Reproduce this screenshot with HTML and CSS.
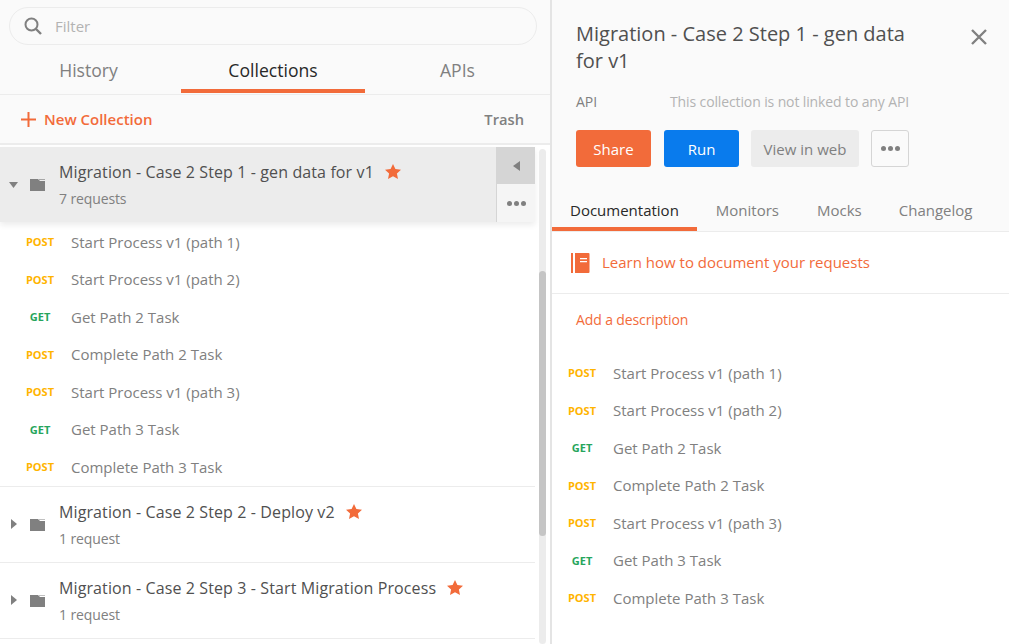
FILE: index.html
```html
<!DOCTYPE html>
<html>
    <head>
        <title>Collections</title>
        <link rel="stylesheet" href="styles.css">
    </head>
    <body>
        <div class="sidebar">
            <div class="search-wrap">
                <div class="search">
                    <svg class="search-icon" width="18" height="18" viewBox="0 0 18 18"><circle cx="7.5" cy="7.5" r="6" fill="none" stroke="#808080" stroke-width="2"/><path d="M12 12l5 5" stroke="#808080" stroke-width="2.4" fill="none"/></svg>
                    <span class="search-text">Filter</span>
                </div>
            </div>
            <div class="tabs">
                <div class="tab tab-first">History</div>
                <div class="tab tab-mid active">Collections</div>
                <div class="tab tab-last">APIs</div>
            </div>
            <div class="toolbar">
                <div class="new-coll">
                    <svg width="15" height="15" viewBox="0 0 15 15"><path d="M6.5 0h2v6.5H15v2H8.500V15h-2V8.500H0v-2h6.500z" fill="#f26b3a"/></svg>
                    <span>New Collection</span>
                </div>
                <div class="trash">Trash</div>
            </div>
            <div class="list">
                <div class="coll-head selected">
                    <svg class="caret" width="9" height="6" viewBox="0 0 9 6"><path d="M0 0h9L4.500 6z" fill="#808080"/></svg>
                    <svg class="folder" width="15" height="12" viewBox="0 0 15 12"><path d="M0 0h8l2 2h5v10H0z" fill="#808080"/><path d="M9 0h6v1H9z" fill="#a6a6a6"/></svg>
                    <div class="coll-info">
                        <div class="coll-name">Migration - Case 2 Step 1 - gen data for v1 <svg class="star" width="16" height="15" viewBox="0 0 16 15"><path d="M8 0l2.400 5 5.600.7-4.100 3.800 1.100 5.500L8 12.300 3 15l1.100-5.500L0 5.700 5.600 5z" fill="#f26b3a"/></svg></div>
                        <div class="coll-count">7 requests</div>
                    </div>
                    <div class="coll-actions">
                        <div class="act act-top"><svg width="7" height="10" viewBox="0 0 7 10"><path d="M7 0v10L0 5z" fill="#808080"/></svg></div>
                        <div class="act act-bottom"><span class="dots"><i></i><i></i><i></i></span></div>
                    </div>
                </div>
                <div class="requests">
                    <div class="req"><span class="method post">POST</span><span class="req-name">Start Process v1 (path 1)</span></div>
                    <div class="req"><span class="method post">POST</span><span class="req-name">Start Process v1 (path 2)</span></div>
                    <div class="req"><span class="method get">GET</span><span class="req-name">Get Path 2 Task</span></div>
                    <div class="req"><span class="method post">POST</span><span class="req-name">Complete Path 2 Task</span></div>
                    <div class="req"><span class="method post">POST</span><span class="req-name">Start Process v1 (path 3)</span></div>
                    <div class="req"><span class="method get">GET</span><span class="req-name">Get Path 3 Task</span></div>
                    <div class="req"><span class="method post">POST</span><span class="req-name">Complete Path 3 Task</span></div>
                </div>
                <div class="coll-head">
                    <svg class="caret" width="6" height="10" viewBox="0 0 6 10"><path d="M0 0l6 5-6 5z" fill="#808080"/></svg>
                    <svg class="folder" width="15" height="12" viewBox="0 0 15 12"><path d="M0 0h8l2 2h5v10H0z" fill="#808080"/><path d="M9 0h6v1H9z" fill="#c0c0c0"/></svg>
                    <div class="coll-info">
                        <div class="coll-name">Migration - Case 2 Step 2 - Deploy v2 <svg class="star" width="16" height="15" viewBox="0 0 16 15"><path d="M8 0l2.400 5 5.600.7-4.100 3.800 1.100 5.500L8 12.300 3 15l1.100-5.500L0 5.700 5.600 5z" fill="#f26b3a"/></svg></div>
                        <div class="coll-count">1 request</div>
                    </div>
                </div>
                <div class="coll-head">
                    <svg class="caret" width="6" height="10" viewBox="0 0 6 10"><path d="M0 0l6 5-6 5z" fill="#808080"/></svg>
                    <svg class="folder" width="15" height="12" viewBox="0 0 15 12"><path d="M0 0h8l2 2h5v10H0z" fill="#808080"/><path d="M9 0h6v1H9z" fill="#c0c0c0"/></svg>
                    <div class="coll-info">
                        <div class="coll-name">Migration - Case 2 Step 3 - Start Migration Process <svg class="star" width="16" height="15" viewBox="0 0 16 15"><path d="M8 0l2.400 5 5.600.7-4.100 3.800 1.100 5.500L8 12.300 3 15l1.100-5.500L0 5.700 5.600 5z" fill="#f26b3a"/></svg></div>
                        <div class="coll-count">1 request</div>
                    </div>
                </div>
                <div class="scrollbar"><div class="thumb"></div></div>
            </div>
        </div>
        <div class="detail">
            <div class="detail-top">
                <div class="title-row">
                    <h1>Migration - Case 2 Step 1 - gen data for v1</h1>
                    <svg class="close" width="16" height="16" viewBox="0 0 16 16"><path d="M1 1l14 14M15 1L1 15" stroke="#808080" stroke-width="2.400" fill="none"/></svg>
                </div>
                <div class="api-row">
                    <span class="api-label">API</span>
                    <span class="api-text">This collection is not linked to any API</span>
                </div>
                <div class="buttons">
                    <div class="btn btn-share">Share</div>
                    <div class="btn btn-run">Run</div>
                    <div class="btn btn-web">View in web</div>
                    <div class="btn btn-more"><span class="dots"><i></i><i></i><i></i></span></div>
                </div>
                <div class="detail-tabs">
                    <div class="dtab dtab-first active">Documentation</div>
                    <div class="dtab">Monitors</div>
                    <div class="dtab dtab-mocks">Mocks</div>
                    <div class="dtab">Changelog</div>
                </div>
            </div>
            <div class="learn">
                <svg width="19" height="20" viewBox="0 0 19 20"><path d="M0 0h2v20H0zM4 0h13.500a1 1 0 0 1 1 1v18a1 1 0 0 1-1 1H4z" fill="#f26b3a"/><path d="M9 5h7v1.200H9zM9 8h7v1.200H9z" fill="#fff"/></svg>
                <span>Learn how to document your requests</span>
            </div>
            <div class="add-desc">Add a description</div>
            <div class="requests detail-requests">
                <div class="req"><span class="method post">POST</span><span class="req-name">Start Process v1 (path 1)</span></div>
                <div class="req"><span class="method post">POST</span><span class="req-name">Start Process v1 (path 2)</span></div>
                <div class="req"><span class="method get">GET</span><span class="req-name">Get Path 2 Task</span></div>
                <div class="req"><span class="method post">POST</span><span class="req-name">Complete Path 2 Task</span></div>
                <div class="req"><span class="method post">POST</span><span class="req-name">Start Process v1 (path 3)</span></div>
                <div class="req"><span class="method get">GET</span><span class="req-name">Get Path 3 Task</span></div>
                <div class="req"><span class="method post">POST</span><span class="req-name">Complete Path 3 Task</span></div>
            </div>
        </div>
    </body>
</html>
```

FILE: styles.css
```css
html, body {
    height: 100%;
}
body {
    margin: 0;
    display: flex;
    overflow: hidden;
    font-family: "Open Sans", sans-serif;
    color: #505050;
    background: #fff;
}
.sidebar {
    width: 550px;
    flex-shrink: 0;
    background: #fafafa;
}
.search-wrap {
    padding: 7px 13px 0 9px;
}
.search {
    height: 36px;
    border: 1px solid #ececec;
    border-radius: 19px;
    display: flex;
    align-items: center;
    padding-left: 14px;
}
.search-text {
    margin-left: 13px;
    font-size: 15px;
    color: #b3b3b3;
}
.tabs {
    display: flex;
    height: 49px;
    border-bottom: 1px solid #ececec;
}
.tab {
    text-align: center;
    font-size: 17.6px;
    line-height: 50px;
    height: 44px;
    color: #808080;
    border-bottom: 4px solid transparent;
}
.tab-first {
    width: 177px;
    margin-right: 4px;
}
.tab-mid {
    width: 184px;
}
.tab-last {
    width: 185px;
}
.tab.active {
    color: #282828;
    border-bottom-color: #f26b3a;
}
.toolbar {
    height: 48px;
    border-bottom: 2px solid #ececec;
    display: flex;
    align-items: center;
    justify-content: space-between;
    padding: 0 26px 0 21px;
}
.new-coll {
    display: flex;
    align-items: center;
    color: #f26b3a;
    font-size: 15px;
    font-weight: 600;
}
.new-coll span {
    margin-left: 8px;
}
.trash {
    color: #808080;
    font-size: 14.7px;
    font-weight: 600;
}
.list {
    position: relative;
    background: #fff;
    padding: 2px 15px 0 0;
    height: 497px;
    overflow: hidden;
}
.coll-head {
    height: 75px;
    display: flex;
    align-items: center;
    border-bottom: 1px solid #ececec;
    position: relative;
}
.coll-head.selected {
    background: #ececec;
    border-bottom: 0;
    height: 75px;
    box-shadow: 0 3px 6px rgba(0, 0, 0, 0.08);
}
.caret {
    margin-left: 11px;
}
.selected .caret {
    margin-left: 9px;
}
.folder {
    margin-left: 13px;
    margin-top: 1px;
}
.selected .folder {
    margin-left: 12px;
}
.coll-info {
    margin-left: 14px;
    margin-top: 2px;
    flex: 1;
}
.selected .coll-info {
    margin-top: 0;
}
.coll-name {
    font-size: 16px;
    line-height: 22px;
    letter-spacing: 0.11px;
}
.star {
    margin-left: 7px;
    vertical-align: -1px;
}
.coll-count {
    font-size: 14px;
    line-height: 20px;
    margin-top: 6px;
    letter-spacing: -0.12px;
    color: #808080;
}
.coll-actions {
    width: 38px;
    align-self: stretch;
    border-left: 1px solid #d5d5d5;
}
.act {
    display: flex;
    align-items: center;
    justify-content: center;
}
.act-top {
    height: 37px;
    background: #d5d5d5;
}
.act-bottom {
    height: 38px;
    background: #f5f5f5;
}
.dots {
    display: flex;
    gap: 2px;
}
.dots i {
    width: 5px;
    height: 5px;
    border-radius: 50%;
    background: #808080;
}
.requests {
    padding-top: 1px;
    border-bottom: 1px solid #ececec;
}
.req {
    height: 37.5px;
    display: flex;
    align-items: center;
}
.method {
    width: 54px;
    margin-left: 13px;
    text-align: center;
    font-size: 11px;
    font-weight: 700;
}
.method.post {
    color: #ffb400;
}
.method.get {
    color: #26a55c;
}
.req-name {
    margin-left: 4px;
    font-size: 15px;
    color: #808080;
}
.scrollbar {
    position: absolute;
    top: 4px;
    bottom: 0;
    left: 539px;
    width: 7px;
    border-radius: 4px;
    background: #ececec;
}
.thumb {
    margin-top: 122px;
    height: 265px;
    border-radius: 4px;
    background: #c5c5c5;
}
.detail {
    flex: 1;
    border-left: 2px solid #e4e4e4;
    min-width: 0;
}
.detail-top {
    background: #fafafa;
    padding: 20px 0 0 0;
}
.title-row {
    display: flex;
    justify-content: space-between;
    padding: 0 22px 0 24px;
}
h1 {
    margin: 0;
    width: 340px;
    font-size: 20px;
    line-height: 27px;
    font-weight: 400;
}
.close {
    margin-top: 9px;
}
.api-row {
    margin-top: 18px;
    padding-left: 24px;
    font-size: 14px;
    display: flex;
    line-height: 20px;
}
.api-label {
    width: 94px;
    color: #808080;
}
.api-text {
    color: #b3b3b3;
    letter-spacing: -0.12px;
}
.buttons {
    display: flex;
    margin-top: 18px;
    padding-left: 24px;
}
.btn {
    height: 37px;
    border-radius: 3px;
    font-size: 15px;
    display: flex;
    align-items: center;
    justify-content: center;
}
.btn-share {
    width: 75px;
    background: #f26b3a;
    color: #fff;
}
.btn-run {
    width: 75px;
    margin-left: 13px;
    background: #097bed;
    color: #fff;
}
.btn-web {
    width: 108px;
    margin-left: 12px;
    background: #ececec;
    color: #808080;
}
.btn-more {
    width: 36px;
    height: 35px;
    margin-left: 12px;
    border: 1px solid #d5d5d5;
}
.detail-tabs {
    display: flex;
    margin-top: 20px;
    height: 44px;
    border-bottom: 1px solid #ececec;
}
.dtab {
    padding: 0 19px;
    font-size: 15px;
    line-height: 46px;
    height: 40px;
    color: #808080;
}
.dtab-first {
    padding: 0 18px;
}
.dtab-mocks {
    padding-right: 18px;
}
.dtab.active {
    color: #282828;
    border-bottom: 4px solid #f26b3a;
}
.learn {
    height: 61px;
    display: flex;
    align-items: center;
    padding-left: 19px;
    border-bottom: 1px solid #ececec;
    color: #f26b3a;
    font-size: 15px;
}
.learn span {
    margin-left: 12px;
    margin-top: -2px;
}
.add-desc {
    margin-top: 16px;
    padding-left: 24px;
    font-size: 14px;
    line-height: 20px;
    letter-spacing: -0.12px;
    color: #f26b3a;
}
.detail-requests {
    margin-top: 22px;
    padding-top: 2px;
    border-bottom: 0;
}
.detail-requests .method {
    margin-left: 3px;
}
```
